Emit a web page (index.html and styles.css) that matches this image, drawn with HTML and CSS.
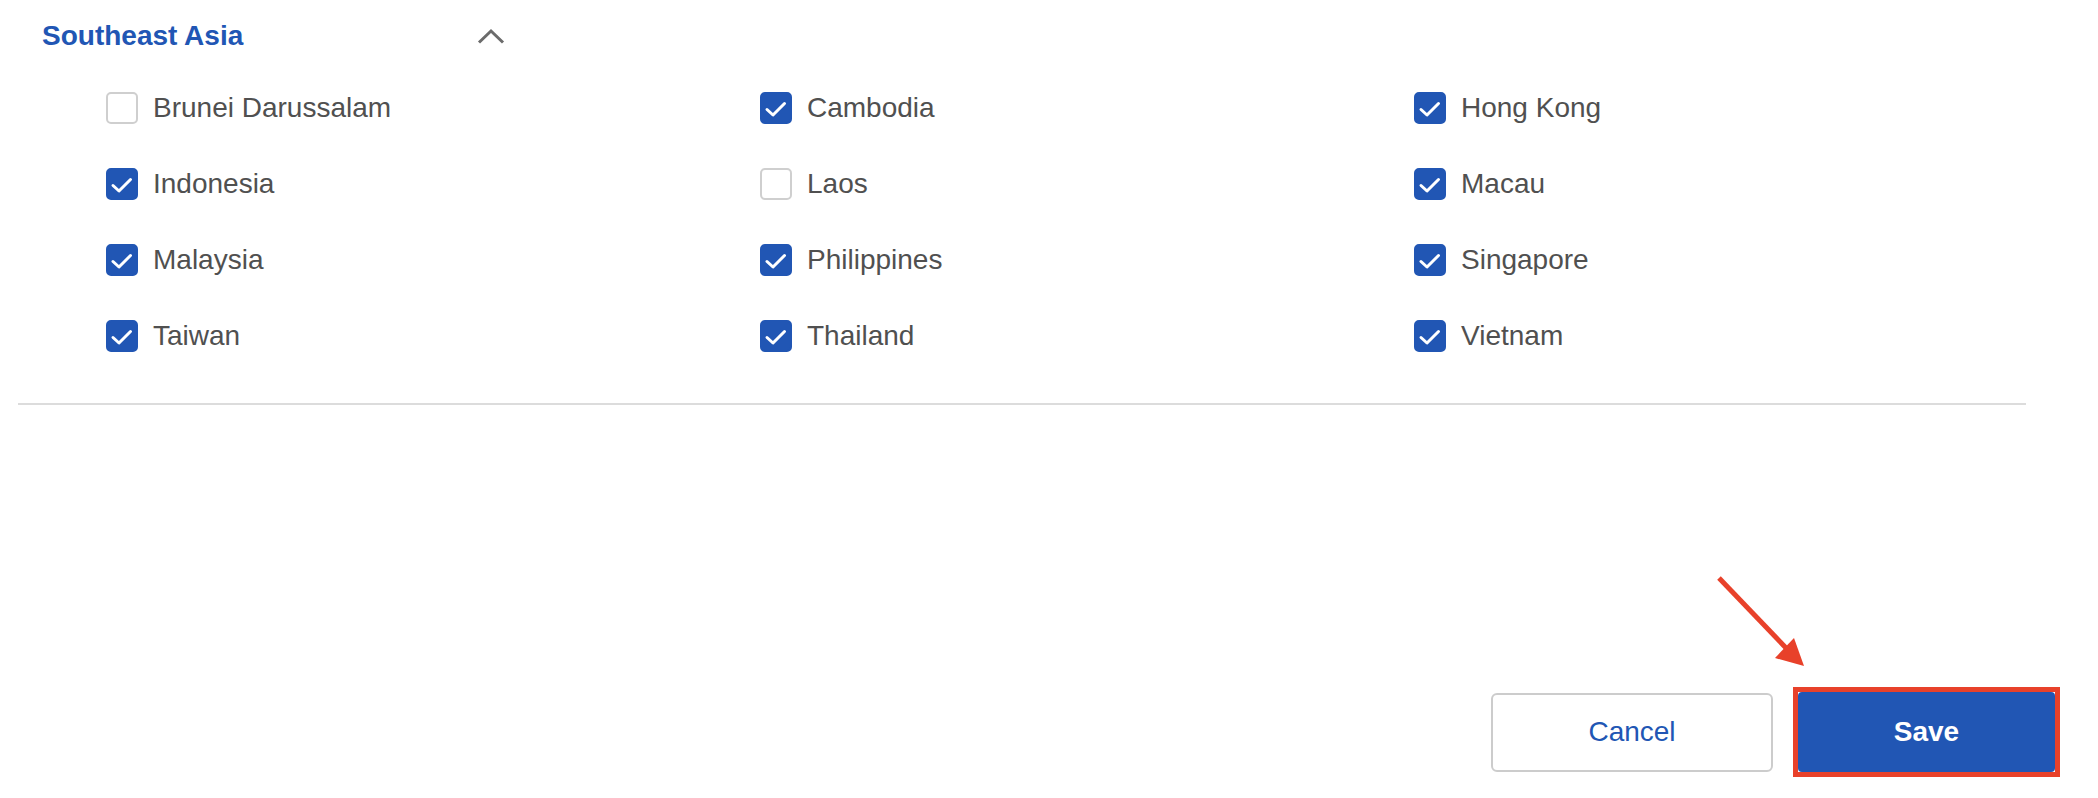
FILE: index.html
```html
<!DOCTYPE html>
<html lang="en">
<head>
    <meta charset="UTF-8">
    <meta name="viewport" content="width=device-width, initial-scale=1.0">
    <title>Regions</title>
    <link rel="stylesheet" href="styles.css">
</head>
<body>
    <div class="region">
        <div class="region-header">
            <h2>Southeast Asia</h2>
            <svg class="chevron" width="28" height="16" viewBox="0 0 28 16">
                <path d="M2 14.5 L14 3 L26 14.5" fill="none" stroke="#6b6b6b" stroke-width="3"/>
            </svg>
        </div>
        <div class="country-grid">
            <label class="country"><span class="box"></span>Brunei Darussalam</label>
            <label class="country"><span class="box checked"><svg viewBox="0 0 32 32"><path d="M7 17.5 L13 23 L24.5 11.5"/></svg></span>Cambodia</label>
            <label class="country"><span class="box checked"><svg viewBox="0 0 32 32"><path d="M7 17.5 L13 23 L24.5 11.5"/></svg></span>Hong Kong</label>

            <label class="country"><span class="box checked"><svg viewBox="0 0 32 32"><path d="M7 17.5 L13 23 L24.5 11.5"/></svg></span>Indonesia</label>
            <label class="country"><span class="box"></span>Laos</label>
            <label class="country"><span class="box checked"><svg viewBox="0 0 32 32"><path d="M7 17.5 L13 23 L24.5 11.5"/></svg></span>Macau</label>

            <label class="country"><span class="box checked"><svg viewBox="0 0 32 32"><path d="M7 17.5 L13 23 L24.5 11.5"/></svg></span>Malaysia</label>
            <label class="country"><span class="box checked"><svg viewBox="0 0 32 32"><path d="M7 17.5 L13 23 L24.5 11.5"/></svg></span>Philippines</label>
            <label class="country"><span class="box checked"><svg viewBox="0 0 32 32"><path d="M7 17.5 L13 23 L24.5 11.5"/></svg></span>Singapore</label>

            <label class="country"><span class="box checked"><svg viewBox="0 0 32 32"><path d="M7 17.5 L13 23 L24.5 11.5"/></svg></span>Taiwan</label>
            <label class="country"><span class="box checked"><svg viewBox="0 0 32 32"><path d="M7 17.5 L13 23 L24.5 11.5"/></svg></span>Thailand</label>
            <label class="country"><span class="box checked"><svg viewBox="0 0 32 32"><path d="M7 17.5 L13 23 L24.5 11.5"/></svg></span>Vietnam</label>
        </div>
    </div>

    <div class="actions">
        <button class="btn btn-cancel">Cancel</button>
        <!-- red annotation frame round the Save button -->
        <div class="highlight">
            <button class="btn btn-save">Save</button>
        </div>
    </div>

    <svg class="annotation-arrow" width="120" height="120" viewBox="0 0 120 120">
        <line x1="19" y1="18" x2="87" y2="89" stroke="#e8412a" stroke-width="5"/>
        <polygon points="104,106 75,98 94,78" fill="#e8412a"/>
    </svg>
</body>
</html>
```

FILE: styles.css
```css
body {
    font-family: "Liberation Sans", Arial, sans-serif;
    background-color: #fff;
    margin: 0;
    padding: 0;
    position: relative;
    line-height: 32px;
}

.region {
    margin: 0 72px 0 18px;
    border-bottom: 2px solid #dcdcdc;
    padding-bottom: 51px;
}

.region-header {
    display: flex;
    justify-content: space-between;
    align-items: center;
    width: 463px;
    padding: 20px 0 0 24px;
}

.region-header h2 {
    margin: 0;
    font-size: 28px;
    font-weight: bold;
    color: #2156b4;
}

.chevron {
    display: block;
}

.country-grid {
    display: grid;
    grid-template-columns: repeat(3, 654px);
    row-gap: 44px;
    margin-top: 40px;
    padding-left: 88px;
}

.country {
    display: flex;
    align-items: center;
    gap: 15px;
    font-size: 28px;
    color: #505050;
    height: 32px;
}

.box {
    box-sizing: border-box;
    width: 32px;
    height: 32px;
    border: 2px solid #cfcfcf;
    border-radius: 5px;
    background-color: #fff;
    flex: none;
}

.box.checked {
    border-color: #2156b4;
    background-color: #2156b4;
}

.box svg {
    display: block;
    width: 32px;
    height: 32px;
    margin: -2px;
}

.box svg path {
    fill: none;
    stroke: #fff;
    stroke-width: 3;
    stroke-linecap: round;
    stroke-linejoin: round;
}

.actions {
    display: flex;
    justify-content: flex-end;
    align-items: center;
    gap: 20px;
    margin-top: 282px;
    padding-right: 38px;
}

.btn {
    font-family: "Liberation Sans", Arial, sans-serif;
    font-size: 28px;
    height: 79px;
    border-radius: 6px;
    cursor: pointer;
    padding: 0;
}

.btn-cancel {
    width: 282px;
    background-color: #fff;
    border: 2px solid #cccccc;
    color: #2156b4;
}

.highlight {
    border: 5px solid #e8412a;
    line-height: 0;
}

.btn-save {
    display: block;
    width: 257px;
    height: 80px;
    background-color: #2156b4;
    border: none;
    color: #fff;
    font-weight: bold;
    border-radius: 4px;
}

.annotation-arrow {
    position: absolute;
    left: 1700px;
    top: 560px;
}
```
